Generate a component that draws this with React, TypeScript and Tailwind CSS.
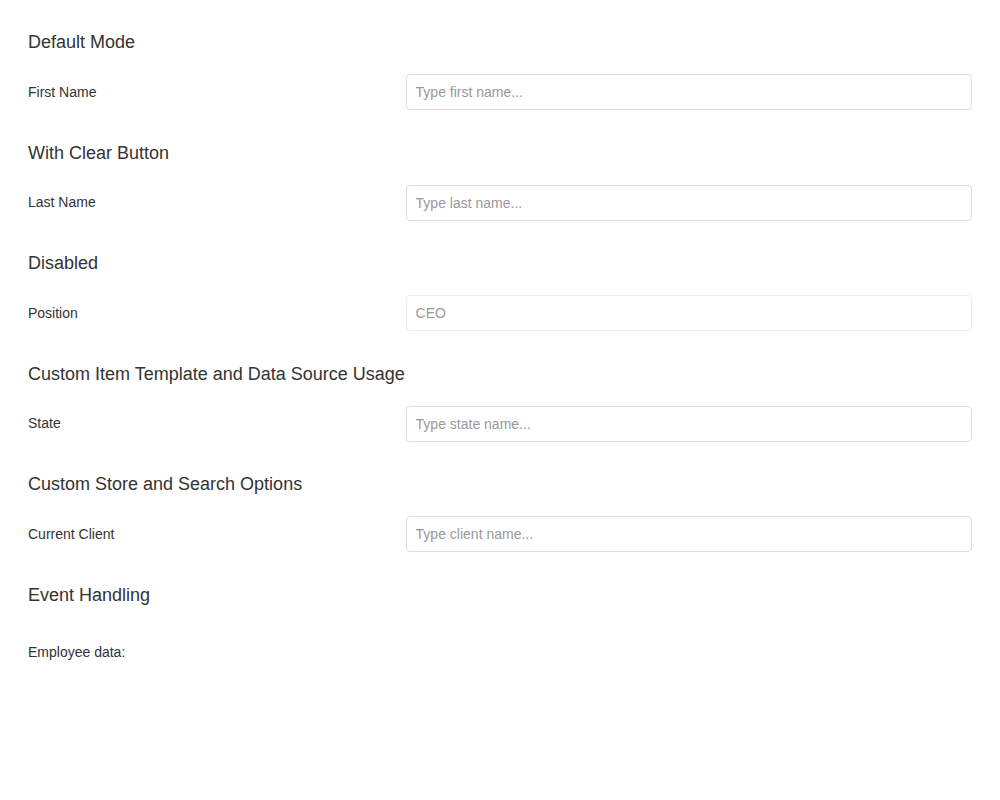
import React from 'react';

const sections = [
  { title: 'Default Mode', label: 'First Name', placeholder: 'Type first name...' },
  { title: 'With Clear Button', label: 'Last Name', placeholder: 'Type last name...' },
  { title: 'Disabled', label: 'Position', value: 'CEO', disabled: true },
  { title: 'Custom Item Template and Data Source Usage', label: 'State', placeholder: 'Type state name...' },
  { title: 'Custom Store and Search Options', label: 'Current Client', placeholder: 'Type client name...' },
];

function Field({ label, placeholder, value, disabled }: { label: string; placeholder?: string; value?: string; disabled?: boolean }) {
  return (
    <div className="flex items-center h-[36px]">
      <div className="w-[40%] text-[14px] text-[#333]">{label}</div>
      <div className={`w-[60%] h-[36px] ${disabled ? 'opacity-50' : ''}`}>
        <input
          className="w-full h-full border border-[#ddd] rounded-[4px] px-[9px] text-[14px] text-[#333] placeholder:text-[#999] outline-none bg-white"
          placeholder={placeholder}
          defaultValue={value}
          disabled={disabled}
        />
      </div>
    </div>
  );
}

export default function App() {
  return (
    <div className="bg-white min-h-[800px] px-[28px] pt-[31px] text-[#333]" style={{ fontFamily: '"Liberation Sans", Arial, sans-serif' }}>
      {sections.map((s) => (
        <div key={s.title} className="mb-[31.5px]">
          <div className="text-[18px] leading-[23px] mb-[20px]">{s.title}</div>
          <Field label={s.label} placeholder={s.placeholder} value={s.value} disabled={s.disabled} />
        </div>
      ))}
      <div>
        <div className="text-[18px] leading-[23px]">Event Handling</div>
        <div className="text-[14px] leading-[20px] mt-[35.5px]">Employee data:</div>
      </div>
    </div>
  );
}
